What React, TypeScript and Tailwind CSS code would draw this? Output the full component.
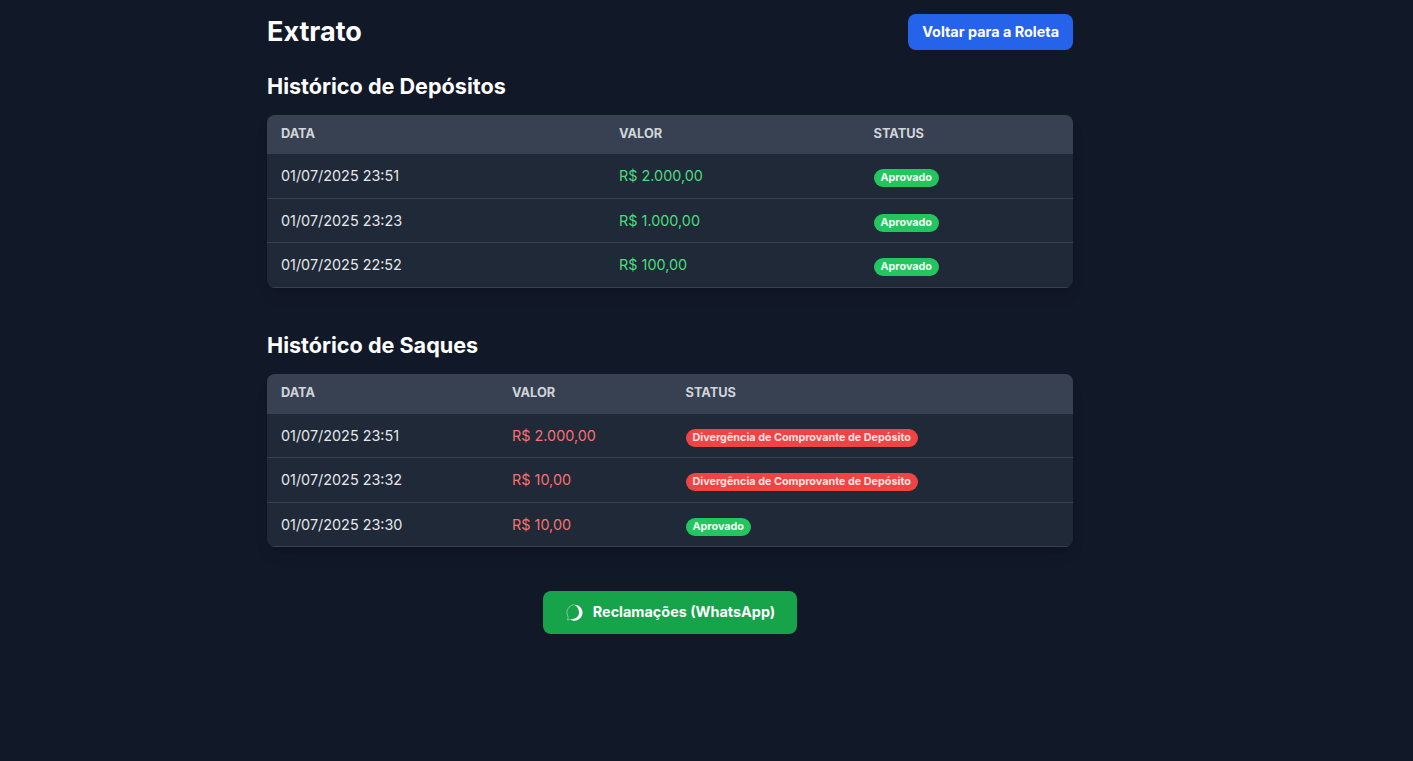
import React from "react";

type Row = { date: string; value: string; status: string; ok: boolean };

const depositos: Row[] = [
  { date: "01/07/2025 23:51", value: "R$ 2.000,00", status: "Aprovado", ok: true },
  { date: "01/07/2025 23:23", value: "R$ 1.000,00", status: "Aprovado", ok: true },
  { date: "01/07/2025 22:52", value: "R$ 100,00", status: "Aprovado", ok: true },
];

const saques: Row[] = [
  { date: "01/07/2025 23:51", value: "R$ 2.000,00", status: "Divergência de Comprovante de Depósito", ok: false },
  { date: "01/07/2025 23:32", value: "R$ 10,00", status: "Divergência de Comprovante de Depósito", ok: false },
  { date: "01/07/2025 23:30", value: "R$ 10,00", status: "Aprovado", ok: true },
];

function Historico({ rows, valueClass, w1, w2 }: { rows: Row[]; valueClass: string; w1: string; w2: string }) {
  return (
    <div className="rounded-lg overflow-hidden bg-[#1f2937] shadow-[0_10px_15px_-3px_rgba(0,0,0,0.1),0_4px_6px_-4px_rgba(0,0,0,0.1)]">
      <table className="w-full table-fixed border-collapse">
        <thead>
          <tr className="bg-[#374151]">
            <th className={`${w1} px-3.5 pt-[9px] pb-[11px] text-left text-[12.8px] leading-[19.2px] font-bold uppercase text-[#d1d5db]`}>Data</th>
            <th className={`${w2} px-3.5 pt-[9px] pb-[11px] text-left text-[12.8px] leading-[19.2px] font-bold uppercase text-[#d1d5db]`}>Valor</th>
            <th className="px-3.5 pt-[9px] pb-[11px] text-left text-[12.8px] leading-[19.2px] font-bold uppercase text-[#d1d5db]">Status</th>
          </tr>
        </thead>
        <tbody>
          {rows.map((r, i) => (
            <tr key={i} className="border-b border-[#374151]">
              <td className="px-3.5 py-[11px] text-[14.4px] leading-[21.6px] text-[#e5e7eb]">{r.date}</td>
              <td className={`px-3.5 py-[11px] text-[14.4px] leading-[21.6px] ${valueClass}`}>{r.value}</td>
              <td className="px-3.5 py-[11px] text-[14.4px] leading-[21.6px]">
                <span
                  className={`inline-block align-middle translate-y-[1px] rounded-full px-[7px] py-[3px] text-[10.8px] leading-3 font-bold whitespace-nowrap ${
                    r.ok ? "bg-[#22c55e] text-[#f0fdf4]" : "bg-[#ef4444] text-[#fee2e2]"
                  }`}
                >
                  {r.status}
                </span>
              </td>
            </tr>
          ))}
        </tbody>
      </table>
    </div>
  );
}

export default function App() {
  return (
    <div className="min-h-[761px] bg-[#111827] font-['Inter',sans-serif] text-white overflow-hidden">
      <div className="ml-[267px] w-[806px] pt-3.5">
        <div className="flex items-center justify-between mb-[19.6px]">
          <h1 className="text-[27px] leading-9 font-bold">Extrato</h1>
          <button className="h-9 rounded-lg bg-[#2563eb] px-3.5 text-[14.4px] font-bold text-white">Voltar para a Roleta</button>
        </div>
        <h2 className="text-[21.6px] leading-8 font-bold mb-[13.4px]">Histórico de Depósitos</h2>
        <Historico rows={depositos} valueClass="text-[#4ade80]" w1="w-[338px]" w2="w-[254.5px]" />
        <h2 className="mt-[41.4px] text-[21.6px] leading-8 font-bold mb-[13px]">Histórico de Saques</h2>
        <Historico rows={saques} valueClass="text-[#f87171]" w1="w-[231px]" w2="w-[173.5px]" />
        <div className="flex justify-center mt-[43.2px]">
          <button className="flex items-center gap-2.5 h-[43px] rounded-lg bg-[#16a34a] px-[22px] text-[14.4px] font-bold text-white">
            <svg width="18" height="18" viewBox="0 0 18 18" fill="none">
              <path d="M9 1.7A8 8 0 1 1 5 16.3C10 16.5 14 14 14 9.5 14 6 12 3 9 1.7Z" fill="#fff" />
              <path d="M9 1.7C5 2 2 5.5 2 9.5c0 2 .6 3.5 1.2 4.5L2.5 17 5 16.3" stroke="#fff" strokeWidth="0.7" strokeOpacity="0.6" />
            </svg>
            Reclamações (WhatsApp)
          </button>
        </div>
      </div>
    </div>
  );
}
